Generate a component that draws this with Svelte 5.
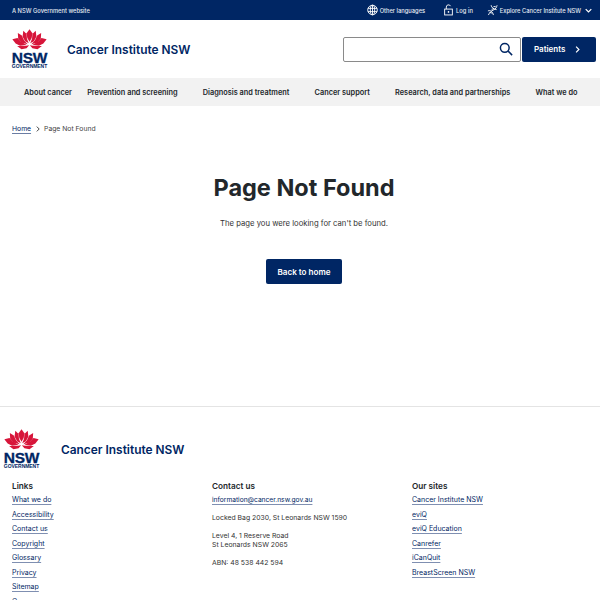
<script>
  const nav = ['About cancer','Prevention and screening','Diagnosis and treatment','Cancer support','Research, data and partnerships','What we do'];
  const links = ['What we do','Accessibility','Contact us','Copyright','Glossary','Privacy','Sitemap','Careers'];
  const sites = ['Cancer Institute NSW','eviQ','eviQ Education','Canrefer','iCanQuit','BreastScreen NSW'];
  const petals = [
    'M24 0 L28 5.5 L27 12 L24 17 L21 12 L20 5.5 Z',
    'M15.5 2 L20 6.5 L20.5 13 L23 19 L18 16.5 L14.5 10 Z',
    'M32.5 2 L28 6.5 L27.5 13 L25 19 L30 16.5 L33.5 10 Z',
    'M8 5 L13.5 8.5 L16.5 15 L21.5 20.5 L13.5 18.5 L8.5 13 Z',
    'M40 5 L34.5 8.5 L31.5 15 L26.5 20.5 L34.5 18.5 L39.5 13 Z',
    'M0.5 13.5 L7.5 12 L12 16.5 L20 21.5 L11 22.5 L5 19.5 Z',
    'M47.5 13.5 L40.5 12 L36 16.5 L28 21.5 L37 22.5 L43 19.5 Z',
    'M7 23 L17 23 L23.5 22 L20 26 L13 27.5 Z',
    'M41 23 L31 23 L24.5 22 L28 26 L35 27.5 Z'
  ];
</script>

{#snippet logo()}
  <div class="logo">
    <svg class="flower" viewBox="0 0 48 28" aria-hidden="true">
      {#each petals as d}<path {d} />{/each}
    </svg>
    <span class="nsw">NSW</span>
    <span class="gov">GOVERNMENT</span>
  </div>
{/snippet}

<div class="page">
  <div class="topbar">
    <span>A NSW Government website</span>
    <div class="top-right">
      <span class="tl">
        <svg class="ti" viewBox="0 0 12 12"><circle cx="6" cy="6" r="5.2"/><ellipse cx="6" cy="6" rx="2.4" ry="5.2"/><path d="M1 4.2h10M1 7.8h10M6 .8v10.4"/></svg>
        Other languages
      </span>
      <span class="tl">
        <svg class="ti" viewBox="0 0 12 12"><rect x="1.8" y="5" width="8.4" height="6.4"/><path d="M3.6 5V2.8a2.4 2.4 0 0 1 4.6-1"/><path d="M6 7.2v1.8" stroke-width="1.5"/></svg>
        Log in
      </span>
      <span class="tl">
        <svg class="ti" viewBox="0 0 12 12"><path d="M1.5 11.5 C3 8.5 4.5 7 7 6 C9.5 5 10.5 3 11 .8M1 7 C4 6 6 7.5 7 11.5M4.5 .8 C5 3.5 7 5 10.5 5.6M3 8.8l3 .6M5 5.2l2.8-.6M7 2.4l2.4-.3"/></svg>
        Explore Cancer Institute NSW
        <svg class="chev" viewBox="0 0 10 6"><path d="M1 1l4 4 4-4"/></svg>
      </span>
    </div>
  </div>

  <header class="head">
    <div class="brand">
      {@render logo()}
      <span class="title">Cancer Institute NSW</span>
    </div>
    <div class="actions">
      <div class="search">
        <svg viewBox="0 0 16 16"><circle cx="6.6" cy="6.6" r="5"/><path d="M10.4 10.4l4.6 4.6"/></svg>
      </div>
      <a class="patients">Patients
        <svg viewBox="0 0 6 10"><path d="M1 1l4 4-4 4"/></svg>
      </a>
    </div>
  </header>

  <nav class="nav">
    {#each nav as item}<span>{item}</span>{/each}
  </nav>

  <div class="crumb">
    <a>Home</a>
    <svg viewBox="0 0 6 10"><path d="M1 1l4 4-4 4"/></svg>
    <span>Page Not Found</span>
  </div>

  <main class="main">
    <h1>Page Not Found</h1>
    <p>The page you were looking for can't be found.</p>
    <a class="back">Back to home</a>
  </main>

  <footer class="foot">
    <div class="foot-brand">
      {@render logo()}
      <span class="title">Cancer Institute NSW</span>
    </div>
    <div class="cols">
      <div class="col">
        <h2>Links</h2>
        {#each links as l}<div class="li"><a>{l}</a></div>{/each}
      </div>
      <div class="col">
        <h2>Contact us</h2>
        <div class="li email"><a>information@cancer.nsw.gov.au</a></div>
        <p class="addr">Locked Bag 2030, St Leonards NSW 1590</p>
        <p class="addr">Level 4, 1 Reserve Road<br />St Leonards NSW 2065</p>
        <p class="addr">ABN: 48 538 442 594</p>
      </div>
      <div class="col">
        <h2>Our sites</h2>
        {#each sites as l}<div class="li"><a>{l}</a></div>{/each}
      </div>
    </div>
  </footer>
</div>

<style>
  :global(body) { margin: 0; background: #fff; }
  .page {
    width: 600px; height: 600px; overflow: hidden; position: relative;
    font-family: "Inter", "Liberation Sans", sans-serif; color: #22272b;
  }
  .topbar {
    height: 20px; background: #002664; color: #e6ebf3; font-size: 5.75px; font-weight: 500;
    display: flex; align-items: center; justify-content: space-between; padding: 0 8px 0 12px;
  }
  .top-right { display: flex; align-items: center; gap: 17px; }
  .tl { display: flex; align-items: center; gap: 2px; }
  .tl:nth-child(1) { margin-right: 1px; }
  .tl:nth-child(2) { margin-right: -3px; }
  .ti { width: 11px; height: 12px; fill: none; stroke: #fff; stroke-width: 1; }
  .chev { width: 7px; height: 5px; fill: none; stroke: #fff; stroke-width: 1.8; margin-left: 2px; }

  .head { height: 58px; display: flex; align-items: center; justify-content: space-between; padding: 0 4px 0 12px; }
  .brand { display: flex; align-items: center; gap: 20px; }
  .logo { width: 35px; display: flex; flex-direction: column; align-items: center; color: #002664; }
  .flower { width: 35px; height: 21px; fill: #d7153a; display: block; }
  .nsw { font-family: "Liberation Sans", sans-serif; font-weight: 700; font-size: 15.5px; line-height: 11px; margin-top: 2px; letter-spacing: -0.2px; -webkit-text-stroke: 0.3px #002664; }
  .gov { font-family: "Liberation Sans", sans-serif; font-weight: 700; font-size: 5px; line-height: 5px; margin-top: 1px; letter-spacing: -0.05px; white-space: nowrap; }
  .title { font-size: 11.9px; font-weight: 600; color: #002664; }
  .actions { display: flex; align-items: center; gap: 1px; }
  .search {
    box-sizing: border-box; width: 178px; height: 25px; border: 1px solid #8a8a8a; border-radius: 2px; background: #fff;
    display: flex; align-items: center; justify-content: flex-end; padding-right: 7px;
  }
  .search svg { width: 14px; height: 14px; fill: none; stroke: #002664; stroke-width: 1.7; }
  .patients {
    width: 74px; height: 25px; box-sizing: border-box; background: #002664; color: #fff; border-radius: 2px;
    font-size: 8px; font-weight: 600; display: flex; align-items: center; justify-content: space-between; padding: 0 16px 0 12px;
  }
  .patients svg { width: 5px; height: 7px; fill: none; stroke: #fff; stroke-width: 1.7; }

  .nav {
    height: 28px; background: #f2f2f2; display: flex; align-items: center; gap: 25.2px; padding-left: 24px;
    font-size: 7.35px; font-weight: 600; color: #22272b; white-space: nowrap;
  }
  .nav span:first-child { margin-right: -10px; }

  .crumb { display: flex; align-items: center; gap: 5px; padding: 9px 0 0 12px; height: 27px; box-sizing: content-box; font-size: 6.8px; color: #444; line-height: 10px; }
  .crumb a { color: #002664; text-decoration: underline; text-decoration-color: #6b7da3; text-decoration-thickness: 1px; text-underline-offset: 2px; text-decoration-skip-ink: none; }
  .crumb svg { width: 4px; height: 6px; fill: none; stroke: #222; stroke-width: 1.4; margin-right: -1px; }

  .main { display: flex; flex-direction: column; align-items: center; padding-left: 8px; }
  h1 { margin: 30px 0 0; font-size: 23.5px; line-height: 32px; font-weight: 700; color: #22272b; }
  .main p { margin: 14px 0 0; font-size: 7.7px; line-height: 12px; color: #333; }
  .back {
    margin-top: 29px; width: 76px; height: 25px; background: #002664; color: #fff; border-radius: 2px;
    font-size: 8.1px; font-weight: 600; display: flex; align-items: center; justify-content: center;
  }

  .foot { position: absolute; left: 0; right: 0; top: 406px; border-top: 1px solid #e4e4e4; }
  .foot-brand { display: flex; align-items: center; gap: 22px; padding: 22px 0 0 4px; }
  .cols { display: grid; grid-template-columns: repeat(3, 200px); padding: 11px 0 0 12px; }
  h2 { margin: 0 0 3px; font-size: 8.2px; line-height: 12px; font-weight: 600; color: #22272b; }
  .li { height: 14px; font-size: 7px; line-height: 10px; }
  .li:nth-child(even) { height: 15px; }
  .li.email { font-size: 6.65px; }
  .li a { color: #002664; text-decoration: underline; text-decoration-color: #7f8fb1; text-decoration-thickness: 1px; text-underline-offset: 2px; text-decoration-skip-ink: none; }
  .addr { margin: 0 0 9px; font-size: 6.85px; line-height: 9px; color: #333; }
  .li + .addr { margin-top: 3px; }
</style>
